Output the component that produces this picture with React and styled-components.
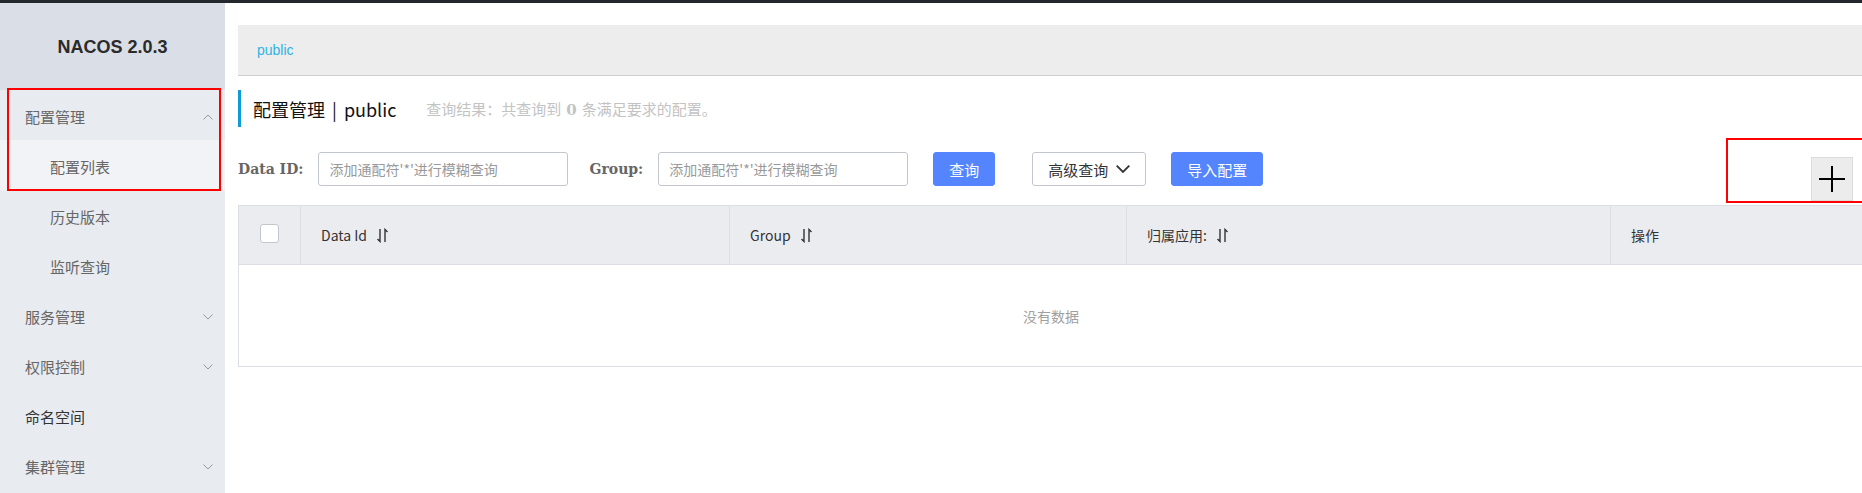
import React from 'react';
import styled, { createGlobalStyle } from 'styled-components';

const GlobalStyle = createGlobalStyle`
  html, body {
    margin: 0;
    padding: 0;
    overflow: hidden;
    background: #fff;
  }

  body {
    font-family: "Liberation Sans", "Noto Sans CJK SC", sans-serif;
    font-size: 14px;
    color: #333;
  }

  * {
    box-sizing: border-box;
  }
`;

const Page = styled.div`
  width: 1862px;
  height: 493px;
  display: flex;
  flex-direction: column;
  overflow: hidden;
`;

const TopBar = styled.div`
  height: 3px;
  flex-shrink: 0;
  background: #23282e;
`;

const Layout = styled.div`
  flex: 1;
  display: flex;
  overflow: hidden;
`;

const Sidebar = styled.aside`
  position: relative;
  width: 225px;
  flex-shrink: 0;
  background: #e8ebf0;
`;

const Brand = styled.div`
  height: 87px;
  display: flex;
  align-items: center;
  justify-content: center;
  background: #dadee6;
  color: #2b2b2b;
  font-size: 18px;
  font-weight: 700;
  padding-top: 2px;
`;

const MenuItem = styled.div`
  height: 50px;
  display: flex;
  align-items: center;
  justify-content: space-between;
  padding: 3px 12px 0 ${(p) => (p.$sub ? 50 : 25)}px;
  font-family: "Noto Sans CJK SC", sans-serif;
  font-size: 15px;
  color: ${(p) => (p.$strong ? '#333' : '#666')};
  background: ${(p) => (p.$active ? '#f2f3f7' : 'transparent')};
`;

const Highlight = styled.div`
  position: absolute;
  left: ${(p) => p.$left}px;
  top: ${(p) => p.$top}px;
  width: ${(p) => p.$width}px;
  height: ${(p) => p.$height}px;
  border: 2px solid #ff0000;
  pointer-events: none;
`;

const Main = styled.main`
  width: 1639px;
  flex-shrink: 0;
  padding: 22px 0 0 13px;
`;

const Breadcrumb = styled.div`
  height: 51px;
  display: flex;
  align-items: center;
  padding-left: 19px;
  background: #ededed;
  border-bottom: 1px solid #cfcfcf;
  color: #2fb3e2;
  font-size: 14px;
`;

const TitleBar = styled.div`
  margin-top: 14px;
  height: 37px;
  display: flex;
  align-items: center;
  padding-left: 12px;
  border-left: 3px solid #0f9bd7;
`;

const Title = styled.h1`
  margin: 0;
  font-family: "Noto Sans CJK SC", sans-serif;
  font-size: 18px;
  font-weight: 400;
  color: #111;

  span {
    margin: 0 7px;
  }
`;

const Summary = styled.div`
  margin-left: 30px;
  font-family: "Noto Sans CJK SC", sans-serif;
  font-size: 15px;
  color: #c3c3c3;

  strong {
    font-family: "DejaVu Serif", serif;
    font-weight: 700;
    margin: 0 5px;
  }
`;

const Toolbar = styled.div`
  position: relative;
  margin-top: 25px;
  display: flex;
  align-items: flex-start;
`;

const Label = styled.label`
  height: 34px;
  display: flex;
  align-items: center;
  font-family: "DejaVu Serif", serif;
  font-weight: 700;
  font-size: 14px;
  color: #666;
  margin-right: 15px;
  margin-left: ${(p) => p.$gap || 0}px;
`;

const Input = styled.input`
  width: 250px;
  height: 34px;
  padding: 0 10px;
  border: 1px solid #c4c6cf;
  border-radius: 3px;
  font-family: "Noto Sans CJK SC", sans-serif;
  font-size: 14px;
  outline: none;

  &::placeholder {
    color: #999;
  }
`;

const Button = styled.button`
  height: 34px;
  width: ${(p) => p.$width}px;
  margin-left: ${(p) => p.$gap}px;
  display: flex;
  align-items: center;
  justify-content: center;
  gap: 8px;
  padding: 0;
  border-radius: 3px;
  font-family: "Noto Sans CJK SC", sans-serif;
  font-size: 15px;
  cursor: pointer;
  border: 1px solid ${(p) => (p.$primary ? '#5584ff' : '#c4c6cf')};
  background: ${(p) => (p.$primary ? '#5584ff' : '#fff')};
  color: ${(p) => (p.$primary ? '#fff' : '#333')};
`;

const AddButton = styled.button`
  margin: 5px 11px 0 auto;
  width: 42px;
  height: 44px;
  display: flex;
  align-items: center;
  justify-content: center;
  padding: 0;
  background: #ececec;
  border: 1px solid #dcdcdc;
`;

const Table = styled.div`
  margin-top: 4px;
  border: 1px solid #dcdee3;
`;

const HeaderRow = styled.div`
  display: grid;
  grid-template-columns: 61px 429px 397px 484px 1fr;
  height: 59px;
  background: #ebecf0;
  border-bottom: 1px solid #dcdee3;
`;

const HeaderCell = styled.div`
  display: flex;
  align-items: center;
  justify-content: ${(p) => (p.$center ? 'center' : 'flex-start')};
  padding: ${(p) => (p.$center ? '0' : '0 20px')};
  border-left: ${(p) => (p.$first ? 'none' : '1px solid #dcdee3')};
  font-family: "Noto Sans CJK SC", sans-serif;
  font-size: 14px;
  color: #333;
`;

const Checkbox = styled.span`
  width: 19px;
  height: 19px;
  margin-top: -3px;
  border: 1px solid #c4c6cf;
  border-radius: 3px;
  background: #fff;
`;

const SortIcon = styled.svg`
  margin-left: 9px;
  flex-shrink: 0;
`;

const Empty = styled.div`
  height: 101px;
  display: flex;
  align-items: center;
  justify-content: center;
  font-family: "Noto Sans CJK SC", sans-serif;
  font-size: 14px;
  color: #a0a0a0;
`;

const Chevron = ({ up, size = 10, color = '#999', stroke = 1 }) => (
  <svg width={size} height={size * 0.6} viewBox="0 0 10 6" fill="none">
    <path
      d={up ? 'M0.5 5.5 L5 1 L9.5 5.5' : 'M0.5 0.5 L5 5 L9.5 0.5'}
      stroke={color}
      strokeWidth={stroke}
    />
  </svg>
);

const Sort = () => (
  <SortIcon width="14" height="15" viewBox="0 0 14 15" fill="none">
    <path d="M4 1 V13.5 L1.5 11" stroke="#333" strokeWidth="1.4" />
    <path d="M9 14 V1.5 L11.5 4" stroke="#333" strokeWidth="1.4" />
  </SortIcon>
);

const menu = [
  { label: '配置管理', arrow: 'up' },
  { label: '配置列表', sub: true, active: true },
  { label: '历史版本', sub: true },
  { label: '监听查询', sub: true },
  { label: '服务管理', arrow: 'down' },
  { label: '权限控制', arrow: 'down' },
  { label: '命名空间', strong: true },
  { label: '集群管理', arrow: 'down' },
];

const columns = [
  { label: 'Data Id', sort: true },
  { label: 'Group', sort: true },
  { label: '归属应用:', sort: true },
  { label: '操作' },
];

const App = () => (
  <>
    <GlobalStyle />
    <Page>
      <TopBar />
      <Layout>
        <Sidebar>
          <Brand>NACOS 2.0.3</Brand>
          {menu.map((item) => (
            <MenuItem key={item.label} $sub={item.sub} $active={item.active} $strong={item.strong}>
              {item.label}
              {item.arrow && <Chevron up={item.arrow === 'up'} />}
            </MenuItem>
          ))}
          <Highlight $left={7} $top={85} $width={214} $height={103} />
        </Sidebar>

        <Main>
          <Breadcrumb>public</Breadcrumb>

          <TitleBar>
            <Title>
              配置管理<span>|</span>public
            </Title>
            <Summary>
              查询结果：共查询到<strong>0</strong>条满足要求的配置。
            </Summary>
          </TitleBar>

          <Toolbar>
            <Label>Data ID:</Label>
            <Input placeholder="添加通配符'*'进行模糊查询" />
            <Label $gap={21}>Group:</Label>
            <Input placeholder="添加通配符'*'进行模糊查询" />
            <Button $primary $width={62} $gap={25}>查询</Button>
            <Button $width={114} $gap={37}>
              高级查询
              <Chevron size={14} color="#333" stroke={1.3} />
            </Button>
            <Button $primary $width={92} $gap={25}>导入配置</Button>
            <AddButton>
              <svg width="26" height="26" viewBox="0 0 26 26">
                <path d="M0 13 H26 M13 0 V26" stroke="#000" strokeWidth="2" />
              </svg>
            </AddButton>
            <Highlight $left={1488} $top={-14} $width={200} $height={65} />
          </Toolbar>

          <Table>
            <HeaderRow>
              <HeaderCell $first $center>
                <Checkbox />
              </HeaderCell>
              {columns.map((col) => (
                <HeaderCell key={col.label}>
                  {col.label}
                  {col.sort && <Sort />}
                </HeaderCell>
              ))}
            </HeaderRow>
            <Empty>没有数据</Empty>
          </Table>
        </Main>
      </Layout>
    </Page>
  </>
);

export default App;
